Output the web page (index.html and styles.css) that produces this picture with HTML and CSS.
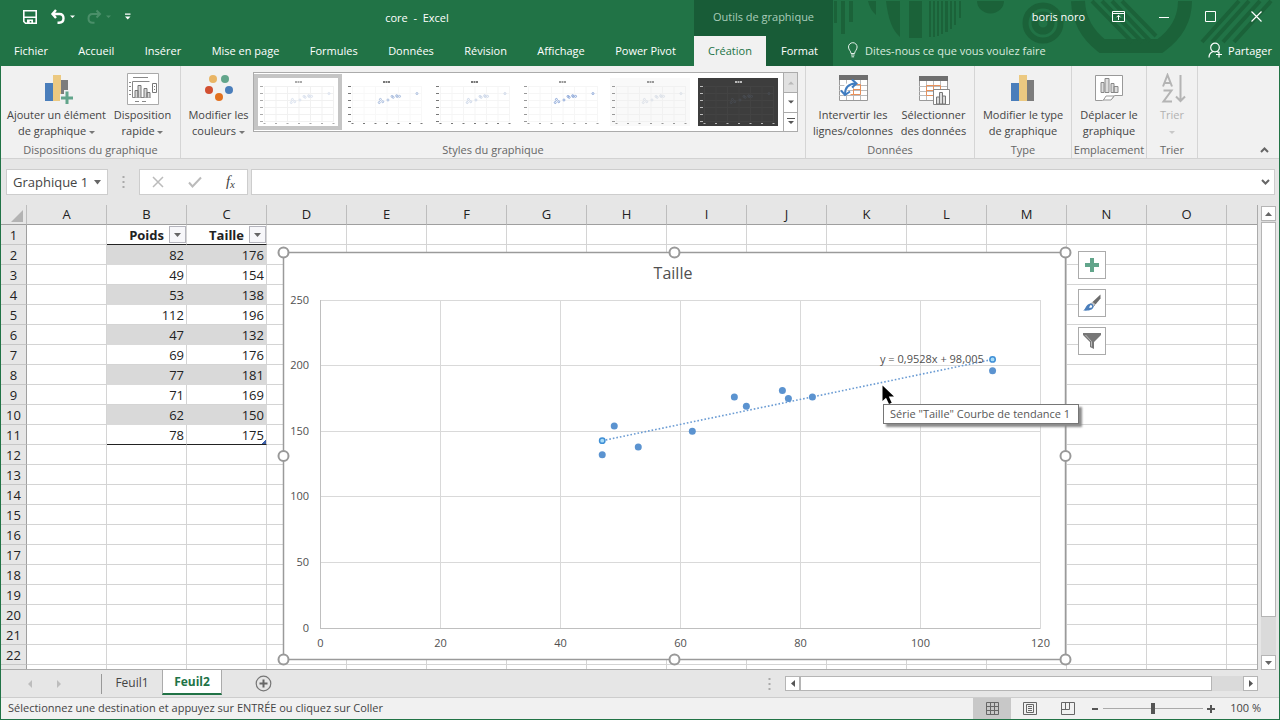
FILE: index.html
```html
<!DOCTYPE html>
<html lang="fr">
<head>
    <meta charset="UTF-8">
    <meta name="viewport" content="width=device-width, initial-scale=1.0">
    <title>core - Excel</title>
    <link rel="stylesheet" href="styles.css">
</head>
<body>
    <div class="app">
        <header class="header">
            <div class="titlebar">
                <div class="quick-access">
                    <button class="icon-btn" aria-label="Enregistrer">
                        <svg width="16" height="16" viewBox="0 0 16 16"><path d="M1.800 1.800h12.400v12.400H3.500l-1.700-1.700z" fill="none" stroke="#fff" stroke-width="1.600"/><path d="M2 7.500h12v1.400H2zM5 10.500h6V14H9.300v-2H7.700v2H5z" fill="#fff"/></svg>
                    </button>
                    <button class="icon-btn undo" aria-label="Annuler">
                        <svg width="26" height="16" viewBox="0 0 26 16"><path d="M6 1L2.500 5 6 9M3 5h6.500q4 0 4 4.300T9 13.800H7.500" fill="none" stroke="#fff" stroke-width="2.400"/><path d="M20 6.500h5L22.500 9z" fill="#fff"/></svg>
                    </button>
                    <button class="icon-btn redo" aria-label="Rétablir">
                        <svg width="26" height="16" viewBox="0 0 26 16"><path d="M10.500 1.500L14 5l-3.500 3.500M13.500 5h-7q-4 0-4 4.500t4.500 4.300h1.500" fill="none" stroke="#4a8f69" stroke-width="2"/><path d="M20 6.500h5L22.500 9z" fill="#4a8f69"/></svg>
                    </button>
                    <button class="icon-btn" aria-label="Personnaliser">
                        <svg width="8" height="8" viewBox="0 0 8 8"><path d="M1 0.500h5.500v1.300H1zM1 3.500h5.500L3.750 6.500z" fill="#fff"/></svg>
                    </button>
                </div>
                <div class="doc-title">core&nbsp; -&nbsp; Excel</div>
            </div>
            <div class="context-title">Outils de graphique</div>
            <div class="window-controls">
                <span class="user">boris noro</span>
                <button class="win-btn" aria-label="Options d'affichage du ruban"><svg width="13" height="11" viewBox="0 0 13 11"><path d="M.5.500h12v10H.5zM.5 2.500h12M6.500 9V4.500M4.500 6.300l2-2 2 2" fill="none" stroke="#fff"/></svg></button>
                <button class="win-btn" aria-label="Réduire"><svg width="10" height="10" viewBox="0 0 10 10"><path d="M0 5.500h10" stroke="#fff"/></svg></button>
                <button class="win-btn" aria-label="Agrandir"><svg width="11" height="11" viewBox="0 0 11 11"><path d="M.5.500h10v10H.5z" fill="none" stroke="#fff"/></svg></button>
                <button class="win-btn" aria-label="Fermer"><svg width="11" height="11" viewBox="0 0 11 11"><path d="M.5.500l10 10M10.500.500l-10 10" stroke="#fff" stroke-width="1.200"/></svg></button>
            </div>

            <nav class="tabs">
                <button>Fichier</button>
                <button>Accueil</button>
                <button>Insérer</button>
                <button>Mise en page</button>
                <button>Formules</button>
                <button>Données</button>
                <button>Révision</button>
                <button>Affichage</button>
                <button>Power Pivot</button>
            </nav>
            <nav class="tabs-context">
                <button class="active">Création</button>
                <button>Format</button>
            </nav>
            <div class="tabs-right">
                <svg width="12" height="16" viewBox="0 0 12 16"><path d="M4 11.500C4 9 1.500 8 1.500 5a4.300 4.300 0 0 1 8.600 0c0 3-2.500 4-2.500 6.500zM4 13h3.600M4.500 14.800h2.600" fill="none" stroke="#e4f1ea"/></svg>
                <button class="tell-me">Dites-nous ce que vous voulez faire</button>
                <button class="share">
                    <svg width="15" height="17" viewBox="0 0 15 17"><circle cx="7" cy="5.500" r="4.300" fill="none" stroke="#fff" stroke-width="1.200"/><path d="M1 15.500c0-4 2-5.500 4.500-6.200M8.500 9.300l2 1M11 9.500v6M8 12.500h6" fill="none" stroke="#fff" stroke-width="1.200"/></svg>
                    Partager
                </button>
            </div>

            <svg class="header-art" width="480" height="54" viewBox="0 0 480 54">
                <g fill="#1b6239">
                    <path fill="#17502f" d="M20 1h3v19h-3zM27 1h5v23h-5z"/>
                    <path d="M35 1h3v22h-3zM42 1h4v33h-4zM50 1h4v21h-4zM69 1h8v14q-6-5-8-14z"/>
                    <path d="M87 1h14v36q-11-9-14-36zM110 1h13v37h-13z"/>
                    <path d="M130 1h2v36h-2zM134 1h2v36h-2zM138 1h2v35h-2zM142 1h2v33h-2zM146 1h3v31h-3zM151 1h2v28h-2zM155 1h2v24h-2zM160 1h2v17h-2z"/>
                    <path d="M178 1h27a13.500 12.500 0 0 1-27 0z"/>
                </g>
                <g fill="none" stroke="#1b6239">
                    <circle cx="244" cy="23" r="8" stroke-width="7"/>
                    <circle cx="244" cy="23" r="17.500" stroke-width="6"/>
                    <path d="M279 1q1 27 24 45h58q25-18 25-45" stroke-width="14"/>
                    <path d="M293 1l40 41M303 1l40 41M313 1l38 40M323 1l34 35" stroke-width="4"/>
                    <path d="M403 42l37-41M413 42l37-41M424 42l37-41M435 42l37-41" stroke-width="4"/>
                </g>
            </svg>
        </header>

        <section class="ribbon">
            <div class="group group-layout">
                <div class="group-row">
                    <button class="big-btn">
                        <svg width="32" height="32" viewBox="0 0 32 32"><path d="M4 10h8v18H4z" fill="#4a7ebb"/><path d="M12 2h8v26h-8z" fill="#ecc981"/><path d="M20 7h7v21h-7z" fill="#7c7c7c"/><path d="M23 17h7v4h4v7h-4v4h-7v-4h-4v-7h4z" fill="#f1f1f1"/><path d="M24.500 18.500h3v5H32v3h-4.500V31h-3v-4.500H20v-3h4.500z" fill="#62a58b"/></svg>
                        <span>Ajouter un élément<br>de graphique <i class="caret"></i></span>
                    </button>
                    <button class="big-btn">
                        <svg width="32" height="32" viewBox="0 0 32 32"><path d="M.5.500h31v31H.5z" fill="#fff" stroke="#aaa"/><path d="M6 4.500h15M2 9.500h2M2 13.500h2M2 17.500h2M2 21.500h2M8 28.500h4M15 28.500h4" stroke="#888"/><path d="M5.500 24.500v-16h17M5.500 24.500h18" fill="none" stroke="#888"/><path d="M8 24.500v-7h3v7M11 24.500v-12h3v12M17 24.500v-9h3v9M20 24.500v-5h3v5" fill="#d8d8d8" stroke="#777"/><path d="M25.500 10.500h4v9h-4zM27 13.500h1M27 16.500h1" fill="#fff" stroke="#777"/></svg>
                        <span>Disposition<br>rapide <i class="caret"></i></span>
                    </button>
                </div>
                <div class="group-label">Dispositions du graphique</div>
            </div>
            <div class="group group-styles">
                <div class="group-row">
                    <button class="big-btn">
                        <svg width="32" height="32" viewBox="0 0 32 32"><circle cx="10" cy="6" r="4" fill="#e9b565"/><circle cx="22" cy="6" r="4" fill="#62a58b"/><circle cx="6" cy="17" r="4" fill="#d24f31"/><circle cx="26" cy="17" r="4" fill="#4a7ebb"/><circle cx="16" cy="24" r="4" fill="#e2711f"/></svg>
                        <span>Modifier les<br>couleurs <i class="caret"></i></span>
                    </button>
                    <div class="gallery">
                        <div class="gallery-items" id="gallery"></div>
                        <div class="gallery-nav">
                            <button aria-label="Précédent" disabled><svg width="6" height="4" viewBox="0 0 6 4"><path d="M0 3.500h6L3 .5z" fill="#b8b8b8"/></svg></button>
                            <button aria-label="Suivant"><svg width="6" height="4" viewBox="0 0 6 4"><path d="M0 .5h6l-3 3z" fill="#555"/></svg></button>
                            <button aria-label="Autres"><svg width="8" height="7" viewBox="0 0 8 7"><path d="M0 0h8v1H0zM1 3h6L4 6z" fill="#555"/></svg></button>
                        </div>
                    </div>
                </div>
                <div class="group-label">Styles du graphique</div>
            </div>
            <div class="group group-data">
                <div class="group-row">
                    <button class="big-btn">
                        <svg width="32" height="32" viewBox="0 0 32 32"><path d="M2.500 2.500h28v25h-28z" fill="#fff" stroke="#999"/><path d="M2 2h29v5H2z" fill="#6f6f6f"/><path d="M2 12.500h28M2 17.500h28M2 22.500h28M9.500 7v20M16.500 7v20M23.500 7v20" stroke="#bbb"/><path d="M12.500 11.500h11v10h-10M16.500 17v5M16 16.500h7" fill="none" stroke="#e8905a"/><path d="M7.500 20c0-6 4-9 9.500-9.500" fill="none" stroke="#fff" stroke-width="5"/><path d="M8 21c0-6 3.500-10 10.500-10.500" fill="none" stroke="#3f7cc0" stroke-width="2"/><path d="M15 6.500l4.500 4-4.500 4M4 17.500l4 4.500 5-3.500" fill="none" stroke="#3f7cc0" stroke-width="2"/></svg>
                        <span>Intervertir les<br>lignes/colonnes</span>
                    </button>
                    <button class="big-btn">
                        <svg width="32" height="32" viewBox="0 0 32 32"><path d="M1.500 3.500h28v24h-28z" fill="#fff" stroke="#999"/><path d="M1 3h29v5H1z" fill="#6f6f6f"/><path d="M1 13.500h28M1 18.500h28M1 22.500h28M8.500 8v19M15.500 8v19M22.500 8v19" stroke="#bbb"/><path d="M8.500 12.500h14v10h-14zM15.500 12v10M9 17.500h13" fill="none" stroke="#e8905a"/><path d="M15.500 16.500h16v15h-16z" fill="#fff" stroke="#888"/><path d="M18.500 31v-7h3v7zM21.500 31V19.500h3V31zM24.500 31v-8h3v8z" fill="#ddd" stroke="#777"/></svg>
                        <span>Sélectionner<br>des données</span>
                    </button>
                </div>
                <div class="group-label">Données</div>
            </div>
            <div class="group group-type">
                <div class="group-row">
                    <button class="big-btn">
                        <svg width="32" height="32" viewBox="0 0 32 32"><path d="M4 10h8v18H4z" fill="#4a7ebb"/><path d="M12 2h8v26h-8z" fill="#ecc981"/><path d="M20 7h7v21h-7z" fill="#7c7c7c"/></svg>
                        <span>Modifier le type<br>de graphique</span>
                    </button>
                </div>
                <div class="group-label">Type</div>
            </div>
            <div class="group group-location">
                <div class="group-row">
                    <button class="big-btn">
                        <svg width="32" height="32" viewBox="0 0 32 32"><path d="M2.500 27.500v-25h27v20h-8l-3 4h-7l-2 1z" fill="#fff" stroke="#999"/><path d="M10.500 27l2.500-4h8l-3 4z" fill="#fff" stroke="#999"/><path d="M8 19.500v-10h3v10zM12 19.500V5.500h4v14zM18 19.500v-9h3v9zM21 19.500v-6h4v6z" fill="#ddd" stroke="#888"/></svg>
                        <span>Déplacer le<br>graphique</span>
                    </button>
                </div>
                <div class="group-label">Emplacement</div>
            </div>
            <div class="group group-sort">
                <div class="group-row">
                    <button class="big-btn" disabled>
                        <svg width="32" height="32" viewBox="0 0 32 32"><path d="M7 13.500L11.500 2 16 13.500M8.500 10h6M7.500 17.500h8l-8 11h8.500" fill="none" stroke="#b4b4b4" stroke-width="2"/><path d="M24.500 2v26M20 23.500l4.500 4.500 4.500-4.500" fill="none" stroke="#b4b4b4" stroke-width="2"/></svg>
                        <span>Trier<br><i class="caret"></i></span>
                    </button>
                </div>
                <div class="group-label">Trier</div>
            </div>
            <button class="collapse" aria-label="Réduire le ruban"><svg width="9" height="6" viewBox="0 0 9 6"><path d="M1 5l3.500-3.500L8 5" fill="none" stroke="#666" stroke-width="2"/></svg></button>
        </section>

        <section class="formula-bar">
            <div class="name-box">
                <input type="text" value="Graphique 1" aria-label="Zone Nom">
                <button aria-label="Liste des noms"><svg width="7" height="5" viewBox="0 0 7 5"><path d="M0 0h7L3.500 4.500z" fill="#666"/></svg></button>
            </div>
            <svg class="dots" width="3" height="12" viewBox="0 0 3 12"><path d="M.5 0h2v2h-2zM.5 5h2v2h-2zM.5 10h2v2h-2z" fill="#aaa"/></svg>
            <div class="fx-box">
                <button aria-label="Annuler"><svg width="12" height="12" viewBox="0 0 12 12"><path d="M1 1l10 10M11 1L1 11" stroke="#bbb" stroke-width="1.500"/></svg></button>
                <button aria-label="Entrer"><svg width="14" height="12" viewBox="0 0 14 12"><path d="M1 6.500L4.500 10.500 13 1.500" fill="none" stroke="#bbb" stroke-width="2"/></svg></button>
                <button class="fx" aria-label="Insérer une fonction">f<sub>x</sub></button>
            </div>
            <div class="formula">
                <input type="text" aria-label="Barre de formule">
                <button aria-label="Développer"><svg width="9" height="6" viewBox="0 0 9 6"><path d="M1 1l3.500 3.500L8 1" fill="none" stroke="#666" stroke-width="2"/></svg></button>
            </div>
        </section>

        <main class="sheet">
            <div class="grid-view">
                <table class="grid" id="grid"></table>

                <div class="chart" id="chart"></div>
                <div class="chart-tools">
                    <button aria-label="Éléments de graphique"><svg width="18" height="18" viewBox="0 0 18 18"><path d="M7 2h4v5h5v4h-5v5H7v-5H2V7h5z" fill="#62a58b"/></svg></button>
                    <button aria-label="Styles de graphique"><svg width="20" height="20" viewBox="0 0 20 20"><path d="M18.500 1.500v4l-5 6-3-2.500z" fill="#6b6b6b"/><path d="M10 9.500l3 2.500-1.500 1.500-3-2.500z" fill="#ddd" stroke="#777" stroke-width=".6"/><path d="M8.500 10.500c2 0 3.500 1.500 3 3.500-1 3.500-6 4-10.500 3.500 3-1 2.500-6.500 7.500-7z" fill="#4a7ebb"/><path d="M8.500 12c1 0 2 .8 1.500 2-.5 1-2 1-3 .5z" fill="#fff"/></svg></button>
                    <button aria-label="Filtres du graphique"><svg width="20" height="20" viewBox="0 0 20 20"><path d="M1 2h18v2l-7 7v7l-4-2v-5L1 4z" fill="#777"/><path d="M3.500 4l6 6.500v5" fill="none" stroke="#bbb"/></svg></button>
                </div>
                <div class="tooltip">Série "Taille" Courbe de tendance 1</div>
                <svg class="cursor" width="13" height="20" viewBox="0 0 13 20"><path d="M.5.500v15.500l3.500-3.300 3 6.300 2.700-1.200-2.900-6.200H12z" fill="#000"/></svg>
            </div>
            <div class="vscroll">
                <button aria-label="Haut"><svg width="7" height="4" viewBox="0 0 7 4"><path d="M0 4h7L3.500 0z" fill="#666"/></svg></button>
                <div class="track"><div class="thumb"></div></div>
                <button aria-label="Bas"><svg width="7" height="4" viewBox="0 0 7 4"><path d="M0 0h7L3.500 4z" fill="#666"/></svg></button>
            </div>
        </main>

        <nav class="sheet-tabs">
            <div class="sheet-nav">
                <button aria-label="Feuille précédente"><svg width="4" height="8" viewBox="0 0 4 8"><path d="M4 0v8L0 4z" fill="#bdbdbd"/></svg></button>
                <button aria-label="Feuille suivante"><svg width="4" height="8" viewBox="0 0 4 8"><path d="M0 0v8l4-4z" fill="#bdbdbd"/></svg></button>
            </div>
            <button class="sheet-tab">Feuil1</button>
            <button class="sheet-tab active">Feuil2</button>
            <button class="add-sheet" aria-label="Nouvelle feuille"><svg width="17" height="17" viewBox="0 0 17 17"><circle cx="8.500" cy="8.500" r="7.300" fill="none" stroke="#777" stroke-width="1.200"/><path d="M4.500 8.500h8M8.500 4.500v8" stroke="#666" stroke-width="2"/></svg></button>
            <svg class="dots" width="3" height="12" viewBox="0 0 3 12"><path d="M.5 0h2v2h-2zM.5 5h2v2h-2zM.5 10h2v2h-2z" fill="#aaa"/></svg>
            <div class="hscroll">
                <button aria-label="Gauche"><svg width="4" height="7" viewBox="0 0 4 7"><path d="M4 0v7L0 3.500z" fill="#555"/></svg></button>
                <div class="track"><div class="thumb"></div></div>
                <button aria-label="Droite"><svg width="4" height="7" viewBox="0 0 4 7"><path d="M0 0v7l4-3.500z" fill="#555"/></svg></button>
            </div>
        </nav>

        <footer class="status">
            <span class="message">Sélectionnez une destination et appuyez sur ENTRÉE ou cliquez sur Coller</span>
            <button class="view active" aria-label="Normal"><svg width="13" height="13" viewBox="0 0 13 13"><path d="M.5.500h12v12H.5zM4.500 0v13M8.500 0v13M0 4.500h13M0 8.500h13" fill="none" stroke="#666"/></svg></button>
            <button class="view" aria-label="Mise en page"><svg width="14" height="13" viewBox="0 0 14 13"><path d="M.5.500h13v12H.5zM3.500 2.500h7v8h-7zM5 4.500h4M5 6.500h4M5 8.500h4" fill="none" stroke="#666"/></svg></button>
            <button class="view" aria-label="Sauts de page"><svg width="14" height="13" viewBox="0 0 14 13"><path d="M.5.500h13v12H.5zM.5 7.500h8v-7M4.500 0v7" fill="none" stroke="#666"/></svg></button>
            <button class="zoom-btn" aria-label="Zoom arrière"><svg width="8" height="8" viewBox="0 0 8 8"><path d="M1 4h6" stroke="#555" stroke-width="2"/></svg></button>
            <input class="zoom" type="range" min="0" max="100" value="50" aria-label="Zoom">
            <button class="zoom-btn" aria-label="Zoom avant"><svg width="8" height="8" viewBox="0 0 8 8"><path d="M0 4h8M4 0v8" stroke="#555" stroke-width="2"/></svg></button>
            <span class="zoom-value">100 %</span>
        </footer>
    </div>

    <script src="script.js"></script>
</body>
</html>
```

FILE: styles.css
```css
* {
    box-sizing: border-box;
}
body {
    margin: 0;
    font-family: "Open Sans", "Noto Sans", sans-serif;
    font-size: 11px;
    color: #444;
}
button,
input {
    margin: 0;
    padding: 0;
    border: 0;
    background: none;
    font: inherit;
    color: inherit;
}
svg {
    display: block;
    flex: none;
}
.app {
    display: flex;
    flex-direction: column;
    height: 100vh;
    border: 1px solid #217346;
    border-top: 0;
    background-color: #e6e6e6;
    overflow: hidden;
}

/* title bar and tabs */
.header {
    position: relative;
    z-index: 0;
    display: grid;
    grid-template-columns: 693px 139px 1fr;
    grid-template-rows: 36px 30px;
    background-color: #217346;
    color: #fff;
}
.header-art {
    position: absolute;
    z-index: -1;
    top: 0;
    right: 0;
}
.titlebar,
.quick-access,
.window-controls,
.tabs,
.tabs-context,
.tabs-right,
.share {
    display: flex;
    align-items: center;
}
.titlebar {
    padding-bottom: 2px;
}
.quick-access {
    width: 139px;
    padding: 0 4px 0 21px;
    gap: 12px;
}
.quick-access .undo {
    margin-right: -2px;
}
.doc-title {
    flex: 1;
    text-align: center;
}
.context-title {
    background-color: #185c37;
    color: #a9cdb9;
    line-height: 34px;
    text-align: center;
}
.window-controls {
    justify-content: flex-end;
    padding-bottom: 3px;
}
.user {
    margin-right: 10px;
}
.win-btn {
    display: flex;
    justify-content: center;
    width: 46px;
}
.tabs {
    justify-content: space-between;
    padding: 0 18px 2px 13px;
}
.tabs-context {
    background-color: #185c37;
    align-items: stretch;
}
.tabs-context button {
    width: 67px;
    padding-bottom: 2px;
}
.tabs-context .active {
    width: 72px;
    background-color: #f1f1f1;
    color: #217346;
}
.tabs-right {
    padding: 0 7px 2px 14px;
    gap: 6px;
}
.tell-me {
    color: #d8eade;
}
.share {
    margin-left: auto;
    gap: 5px;
}

/* ribbon */
.ribbon {
    display: flex;
    height: 93px;
    background-color: #f1f1f1;
    border-bottom: 1px solid #d2d2d2;
}
.group {
    display: flex;
    flex-direction: column;
    justify-content: space-between;
    padding-top: 6px;
    border-right: 1px solid #d5d5d5;
}
.group-row {
    display: flex;
    justify-content: center;
}
.group-label {
    line-height: 16px;
    text-align: center;
    color: #666;
}
.group-layout {
    width: 180px;
}
.group-layout .big-btn {
    width: 62px;
}
.group-layout .big-btn:first-child {
    width: 110px;
}
.group-layout .group-row {
    padding-right: 6px;
}
.group-styles {
    width: 625px;
}
.group-styles .group-row {
    justify-content: flex-start;
    padding-left: 3px;
}
.group-styles .big-btn {
    width: 69px;
}
.group-data {
    width: 169px;
}
.group-data .big-btn {
    width: 74px;
}
.group-data .big-btn:first-child {
    width: 87px;
}
.group-type {
    width: 97px;
}
.group-location {
    width: 75px;
}
.group-sort {
    width: 51px;
}
.big-btn {
    display: flex;
    flex-direction: column;
    align-items: center;
    gap: 2px;
    padding-top: 1px;
    line-height: 16px;
    white-space: nowrap;
}
.big-btn:disabled {
    color: #b1b1b1;
}
.caret {
    display: inline-block;
    vertical-align: middle;
    border: 3px solid transparent;
    border-top-color: #777;
    border-bottom: 0;
}
.big-btn:disabled .caret {
    border-top-color: #c8c8c8;
}
.gallery {
    display: flex;
    width: 545px;
    height: 60px;
    border: 1px solid #ababab;
    background-color: #fff;
}
.gallery-items {
    flex: 1;
    display: flex;
    padding: 1px 0;
}
.style-item {
    flex: none;
    width: 88px;
    padding: 4px;
}
.style-item.selected {
    background-color: #c5c5c5;
}
.gallery-nav {
    display: grid;
    grid-template-rows: repeat(3, 1fr);
    width: 14px;
    border-left: 1px solid #ababab;
}
.gallery-nav button {
    display: grid;
    place-items: center;
}
.gallery-nav button + button {
    border-top: 1px solid #ababab;
}
.gallery-nav button:disabled {
    background-color: #e1e1e1;
}
.collapse {
    margin-left: auto;
    align-self: flex-end;
    padding: 5px 10px;
}

/* formula bar */
.formula-bar {
    display: flex;
    align-items: flex-start;
    height: 46px;
    padding: 10px 4px 0 5px;
}
.name-box,
.fx-box,
.formula {
    display: flex;
    align-items: center;
    height: 26px;
    border: 1px solid #cdcdcd;
    background-color: #fff;
}
.name-box {
    width: 102px;
    padding: 0 6px;
    font-size: 13px;
}
.name-box input {
    width: 100%;
    flex: 1;
}
.formula-bar .dots {
    margin: 7px 14px 0;
}
.fx-box {
    width: 109px;
    margin-right: 3px;
    justify-content: space-around;
}
.fx {
    font-family: "Liberation Serif", serif;
    font-style: italic;
    font-size: 15px;
    line-height: 20px;
}
.fx sub {
    font-size: 11px;
    vertical-align: -2px;
}
.formula {
    flex: 1;
    padding: 0 4px;
}
.formula input {
    flex: 1;
}

/* sheet */
.sheet {
    flex: 1;
    min-height: 0;
    display: flex;
}
.grid-view {
    position: relative;
    flex: 1;
    min-width: 0;
    overflow: hidden;
    background-color: #fff;
    border-right: 1px solid #ababab;
    border-bottom: 1px solid #ababab;
}
.grid {
    width: 1306px;
    table-layout: fixed;
    border-spacing: 0;
    font-size: 13px;
    line-height: 18px;
    color: #222;
}
.grid .row-col {
    width: 26px;
}
.grid tr {
    height: 20px;
}
.grid th,
.grid td {
    height: 20px;
    padding: 0;
    border-right: 1px solid #d4d4d4;
    border-bottom: 1px solid #d4d4d4;
}
.grid thead th {
    padding-bottom: 1px;
    font-weight: normal;
    background-color: #e6e6e6;
    border-right-color: #bdbdbd;
    border-bottom-color: #9f9f9f;
}
.grid tbody th {
    font-weight: normal;
    background-color: #e6e6e6;
    border-right-color: #9f9f9f;
    border-bottom-color: #c6c6c6;
}
.grid td {
    text-align: right;
    padding-right: 2px;
}
.grid .band {
    background-color: #d9d9d9;
    border-color: #d9d9d9;
}
.grid .head {
    padding: 0;
    font-weight: bold;
    border-bottom-color: #222;
}
.grid .last {
    border-bottom-color: #222;
}
.grid .end {
    background: linear-gradient(135deg, transparent 50%, #3b5ea8 50%) right bottom / 4px 4px no-repeat;
}
.head-cell {
    display: flex;
    align-items: center;
    justify-content: flex-end;
    gap: 5px;
    height: 19px;
}
.filter {
    display: grid;
    place-items: center;
    width: 17px;
    height: 17px;
    border: 1px solid #b5b5bd;
    background-color: #f7f7fa;
}
.select-all {
    margin: 5px 3px 1px 10px;
}

/* chart floats over the cells */
.chart {
    position: absolute;
    left: 282px;
    top: 47px;
}
.chart svg {
    overflow: visible;
}
.chart .frame {
    fill: #fff;
    stroke: #9a9a9a;
    stroke-width: 1.500;
}
.chart .handle {
    fill: #fff;
    stroke: #999;
    stroke-width: 2;
}
.chart .line {
    stroke: #d9d9d9;
}
.chart .axis {
    stroke: #bfbfbf;
}
.chart .point {
    fill: #5b93d0;
}
.chart .end-point {
    fill: #a8dcf8;
    stroke: #3f8fd6;
    stroke-width: 1.500;
}
.chart .trend {
    stroke: #6a9bd3;
    stroke-width: 1.600;
    stroke-dasharray: 1.600 2;
}
.chart text {
    fill: #505050;
    font-size: 11px;
}
.chart .title {
    font-size: 16px;
}
.chart-tools {
    position: absolute;
    left: 1077px;
    top: 46px;
    display: grid;
    gap: 10px;
}
.chart-tools button {
    display: grid;
    place-items: center;
    width: 28px;
    height: 28px;
    border: 1px solid #ababab;
    background-color: #fff;
}
.tooltip {
    position: absolute;
    left: 882px;
    top: 199px;
    padding: 0 8px 0 6px;
    border: 1px solid #767676;
    background-color: #fff;
    color: #575757;
    line-height: 18px;
    white-space: nowrap;
    box-shadow: 3px 3px 2px #8c8c8c;
}
.cursor {
    position: absolute;
    left: 881px;
    top: 180px;
}

/* scroll bars */
.vscroll {
    display: flex;
    flex-direction: column;
    width: 21px;
    padding: 1px 3px 0 3px;
}
.vscroll button,
.hscroll button {
    display: grid;
    place-items: center;
    width: 15px;
    height: 15px;
    border: 1px solid #b5b5b5;
    background-color: #fff;
}
.track {
    flex: 1;
    background-color: #dadada;
}
.thumb {
    background-color: #fff;
    border: 1px solid #b5b5b5;
}
.vscroll .thumb {
    height: 91%;
    margin-top: 1px;
}
.hscroll {
    display: flex;
    width: 473px;
    margin-right: 21px;
}
.hscroll .thumb {
    width: 93%;
    height: 15px;
}

/* sheet tabs */
.sheet-tabs {
    display: flex;
    align-items: center;
    height: 27px;
    font-size: 12px;
}
.sheet-nav {
    display: flex;
    justify-content: space-between;
    align-items: center;
    width: 101px;
    height: 20px;
    padding: 0 40px 0 27px;
    border-right: 1px solid #999;
}
.sheet-tab {
    align-self: flex-start;
    width: 60px;
    height: 25px;
}
.sheet-tab.active {
    border: 1px solid #ababab;
    border-top: 0;
    border-bottom: 2px solid #217346;
    background-color: #fff;
    color: #217346;
    font-weight: bold;
}
.add-sheet {
    margin-left: 33px;
}
.sheet-tabs .dots {
    margin: 0 14px 0 auto;
}

/* status bar */
.status {
    display: flex;
    align-items: center;
    height: 22px;
    background-color: #f1f1f1;
    border-top: 1px solid #cdcdcd;
}
.message {
    flex: 1;
    padding: 0 0 2px 7px;
}
.view {
    display: grid;
    place-items: center;
    width: 38px;
    height: 21px;
}
.view.active {
    background-color: #c8c8c8;
}
.zoom-btn {
    display: grid;
    place-items: center;
    width: 16px;
}
.zoom {
    appearance: none;
    width: 100px;
    height: 12px;
    background: linear-gradient(#aaa, #aaa) center / 100% 1px no-repeat;
}
.zoom::-webkit-slider-thumb {
    appearance: none;
    width: 4px;
    height: 11px;
    background-color: #555;
}
.zoom-value {
    padding: 0 18px 2px 11px;
}
```

FILE: script.js
```javascript
const headers = ['Poids', 'Taille'];
const data = [
    [82, 176], [49, 154], [53, 138], [112, 196], [47, 132],
    [69, 176], [77, 181], [71, 169], [62, 150], [78, 175]
];

function buildGrid() {
    const letters = 'ABCDEFGHIJKLMNO'.split('').concat('');
    let html = '<thead><tr><th class="row-col"><svg class="select-all" width="12" height="12"><path d="M12 0v12H0z" fill="#b3b3b3"/></svg></th>';
    letters.forEach(l => html += '<th>' + l + '</th>');
    html += '</tr></thead><tbody>';

    for (let row = 1; row <= 23; row++) {
        html += '<tr><th>' + (row < 23 ? row : '') + '</th>';
        letters.forEach((l, col) => {
            const i = col - 1;
            if (i < 0 || i > 1 || row > data.length + 1) {
                html += '<td></td>';
            } else if (row === 1) {
                html += '<td class="head"><div class="head-cell">' + headers[i] +
                    '<button class="filter" aria-label="Filtrer"><svg width="7" height="4"><path d="M0 0h7L3.500 4z" fill="#666"/></svg></button></div></td>';
            } else {
                let cls = row % 2 === 0 ? 'band' : '';
                if (row === data.length + 1) cls = i === 1 ? 'last end' : 'last';
                html += '<td class="' + cls + '">' + data[row - 2][i] + '</td>';
            }
        });
        html += '</tr>';
    }
    document.getElementById('grid').innerHTML = html + '</tbody>';
}

function buildChart() {
    const w = 782, h = 407;
    const px = v => 37 + v * 6.005;
    const py = v => 376 - v * 1.312;
    const fit = v => 0.9528 * v + 98.005;
    let s = `<svg width="${w}" height="${h}"><rect class="frame" x="0.5" y="0.5" width="${w}" height="${h}"/>`;

    for (let v = 0; v <= 250; v += 50) {
        const y = Math.floor(py(v)) + 0.5;
        s += `<line class="${v ? 'line' : 'axis'}" x1="${px(0)}" x2="${px(120)}" y1="${y}" y2="${y}"/>`;
        s += `<text x="26" y="${y + 3}" text-anchor="end">${v}</text>`;
    }
    for (let v = 0; v <= 120; v += 20) {
        const x = Math.floor(px(v)) + 0.5;
        s += `<line class="${v ? 'line' : 'axis'}" x1="${x}" x2="${x}" y1="${py(250)}" y2="${py(0)}"/>`;
        s += `<text x="${x}" y="395" text-anchor="middle">${v}</text>`;
    }
    s += `<text class="title" x="390" y="27" text-anchor="middle">${headers[1]}</text>`;
    s += `<line class="trend" x1="${px(47)}" y1="${py(fit(47))}" x2="${px(112)}" y2="${py(fit(112))}"/>`;
    data.forEach(d => s += `<circle class="point" cx="${px(d[0])}" cy="${py(d[1])}" r="3.500"/>`);
    [47, 112].forEach(v => s += `<circle class="end-point" cx="${px(v)}" cy="${py(fit(v))}" r="2.700"/>`);
    s += '<text x="597" y="111">y = 0,9528x + 98,005</text>';

    for (const x of [0, w / 2, w]) {
        for (const y of [0, h / 2, h]) {
            if (x === w / 2 && y === h / 2) continue;
            s += `<circle class="handle" cx="${x + 0.5}" cy="${y + 0.5}" r="5"/>`;
        }
    }
    document.getElementById('chart').innerHTML = s + '</svg>';
}

// the chart style previews share one small drawing
function buildGallery() {
    const styles = [
        { bg: '#fff', grid: '#f1f1f1', ink: '#aaa', dot: '#dbe3f0' },
        { bg: '#fff', grid: '#f8f8f8', ink: '#777', dot: '#a9bddf' },
        { bg: '#fff', grid: '#f5f5f5', ink: '#777', dot: '#cdd8ea' },
        { bg: '#fff', grid: '#f6f6f6', ink: '#999', dot: '#8faadb' },
        { bg: '#f9f9f9', grid: '#f1f1f1', ink: '#999', dot: '#dde2ea' },
        { bg: '#3d3d3d', grid: '#434343', ink: '#bbb', dot: '#484c52' }
    ];
    let html = '';
    styles.forEach((st, n) => {
        let s = `<svg width="80" height="48"><rect width="80" height="48" fill="${st.bg}"/>`;
        for (let i = 0; i < 6; i++) {
            const y = 8.5 + i * 7;
            s += `<path d="M6 ${y}h70" stroke="${st.grid}"/><path d="M2 ${y}h3" stroke="${st.ink}"/>`;
        }
        for (let i = 0; i < 7; i++) {
            const x = 6.5 + i * 11.5;
            s += `<path d="M${x} 8v35" stroke="${st.grid}"/><path d="M${x - 1} 45.500h2" stroke="${st.ink}"/>`;
        }
        s += `<path d="M37 4h7" stroke="${st.ink}" stroke-width="2" stroke-dasharray="2 .5"/>`;
        data.forEach(d => s += `<circle cx="${6 + d[0] * 0.58}" cy="${43 - d[1] * 0.14}" r="1" fill="none" stroke="${st.dot}"/>`);
        html += `<button class="style-item${n === 0 ? ' selected' : ''}" aria-label="Style ${n + 1}">${s}</svg></button>`;
    });
    document.getElementById('gallery').innerHTML = html;
}

buildGrid();
buildChart();
buildGallery();
```
